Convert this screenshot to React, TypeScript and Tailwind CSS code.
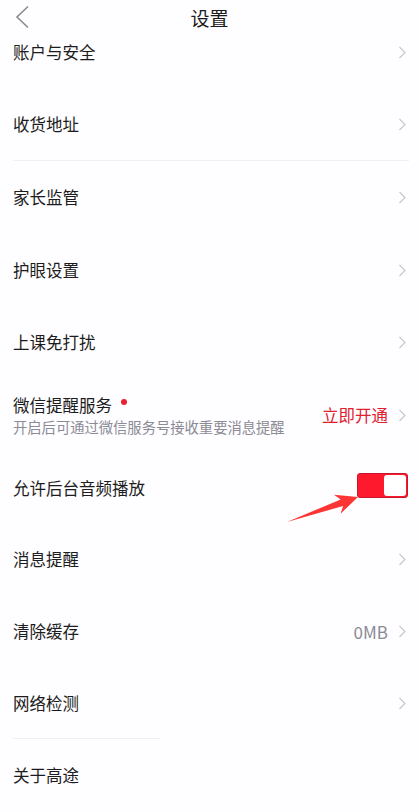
import React from "react";

const font = { fontFamily: '"Noto Sans CJK SC", "Noto Sans", sans-serif' };

function Chevron() {
  return (
    <svg width="9" height="13" viewBox="0 0 9 13" className="shrink-0">
      <path d="M1.5 1 L7 6.5 L1.5 12" fill="none" stroke="#c9c9cd" strokeWidth="1.2" />
    </svg>
  );
}

function Row({
  label,
  h,
  extra,
  chevron = true,
  pad = "",
}: {
  label: string;
  h: string;
  extra?: React.ReactNode;
  chevron?: boolean;
  pad?: string;
}) {
  return (
    <div className={`flex items-center justify-between pl-[13px] pr-[12px] ${h} ${pad}`}>
      <span className="text-[16.5px] leading-none text-[#1c1c20]">{label}</span>
      <div className="flex items-center gap-[10px]">
        {extra}
        {chevron && <Chevron />}
      </div>
    </div>
  );
}

export default function App() {
  return (
    <div className="relative w-[419px] h-[812px] overflow-hidden bg-[#fefdff]" style={font}>
      {/* top bar */}
      <div className="grid grid-cols-[1fr_auto_1fr] items-center h-[34px]">
        <div className="pl-[15px] flex items-center">
          <svg width="15" height="24" viewBox="0 0 15 24">
            <path d="M13 1.5 L2 12 L13 22.5" fill="none" stroke="#8c8c8c" strokeWidth="1.6" />
          </svg>
        </div>
        <span className="text-[19px] leading-none text-[#1a1a1a]">设置</span>
        <div />
      </div>

      <Row label="账户与安全" h="h-[55px]" pad="pb-[19px]" />
      <Row label="收货地址" h="h-[71px]" />
      <div className="mx-[13px] mr-[10px] h-px bg-[#f0f0f3]" />
      <Row label="家长监管" h="h-[73px]" />
      <Row label="护眼设置" h="h-[72px]" />
      <Row label="上课免打扰" h="h-[73px]" />

      {/* WeChat reminder row */}
      <div className="flex items-center justify-between pl-[13px] pr-[12px] h-[73px]">
        <div className="flex flex-col gap-[7px]">
          <div className="flex items-start">
            <span className="text-[16.5px] leading-none text-[#1c1c20]">微信提醒服务</span>
            <span className="ml-[9px] mt-[2px] w-[6px] h-[6px] rounded-full bg-[#ea1f31]" />
          </div>
          <span className="text-[14.3px] leading-none text-[#8b8b95]">开启后可通过微信服务号接收重要消息提醒</span>
        </div>
        <div className="flex items-center gap-[10px]">
          <span className="text-[16.5px] leading-none text-[#e0202f]">立即开通</span>
          <Chevron />
        </div>
      </div>

      {/* background audio toggle */}
      <div className="flex items-center justify-between pl-[13px] pr-[11px] h-[72px]">
        <span className="text-[16.5px] leading-none text-[#1c1c20]">允许后台音频播放</span>
        <div className="mb-[5px] w-[51px] h-[25px] rounded-[3px] bg-[#fe1a2c] border border-[#c8172a] flex items-center justify-end p-[1px]">
          <div className="w-[22px] h-[21px] rounded-[3px] bg-white" />
        </div>
      </div>

      <Row label="消息提醒" h="h-[70px]" />
      <Row
        label="清除缓存"
        h="h-[75px]"
        extra={<span className="text-[17px] leading-none text-[#8b8b95]">0MB</span>}
      />
      <Row label="网络检测" h="h-[69px]" />
      <div className="ml-[13px] w-[147px] h-px bg-[#f0f0f3]" />
      <Row label="关于高途" h="h-[73px]" chevron={false} />

      {/* annotation arrow pointing at the toggle */}
      <svg
        className="absolute inset-0 pointer-events-none"
        width="419"
        height="812"
        viewBox="0 0 419 812"
      >
        <polygon
          points="287,522 340.7,499.4 334,494.8 358,497 340.5,513.8 343.1,506"
          fill="#fd3535"
        />
      </svg>
    </div>
  );
}
